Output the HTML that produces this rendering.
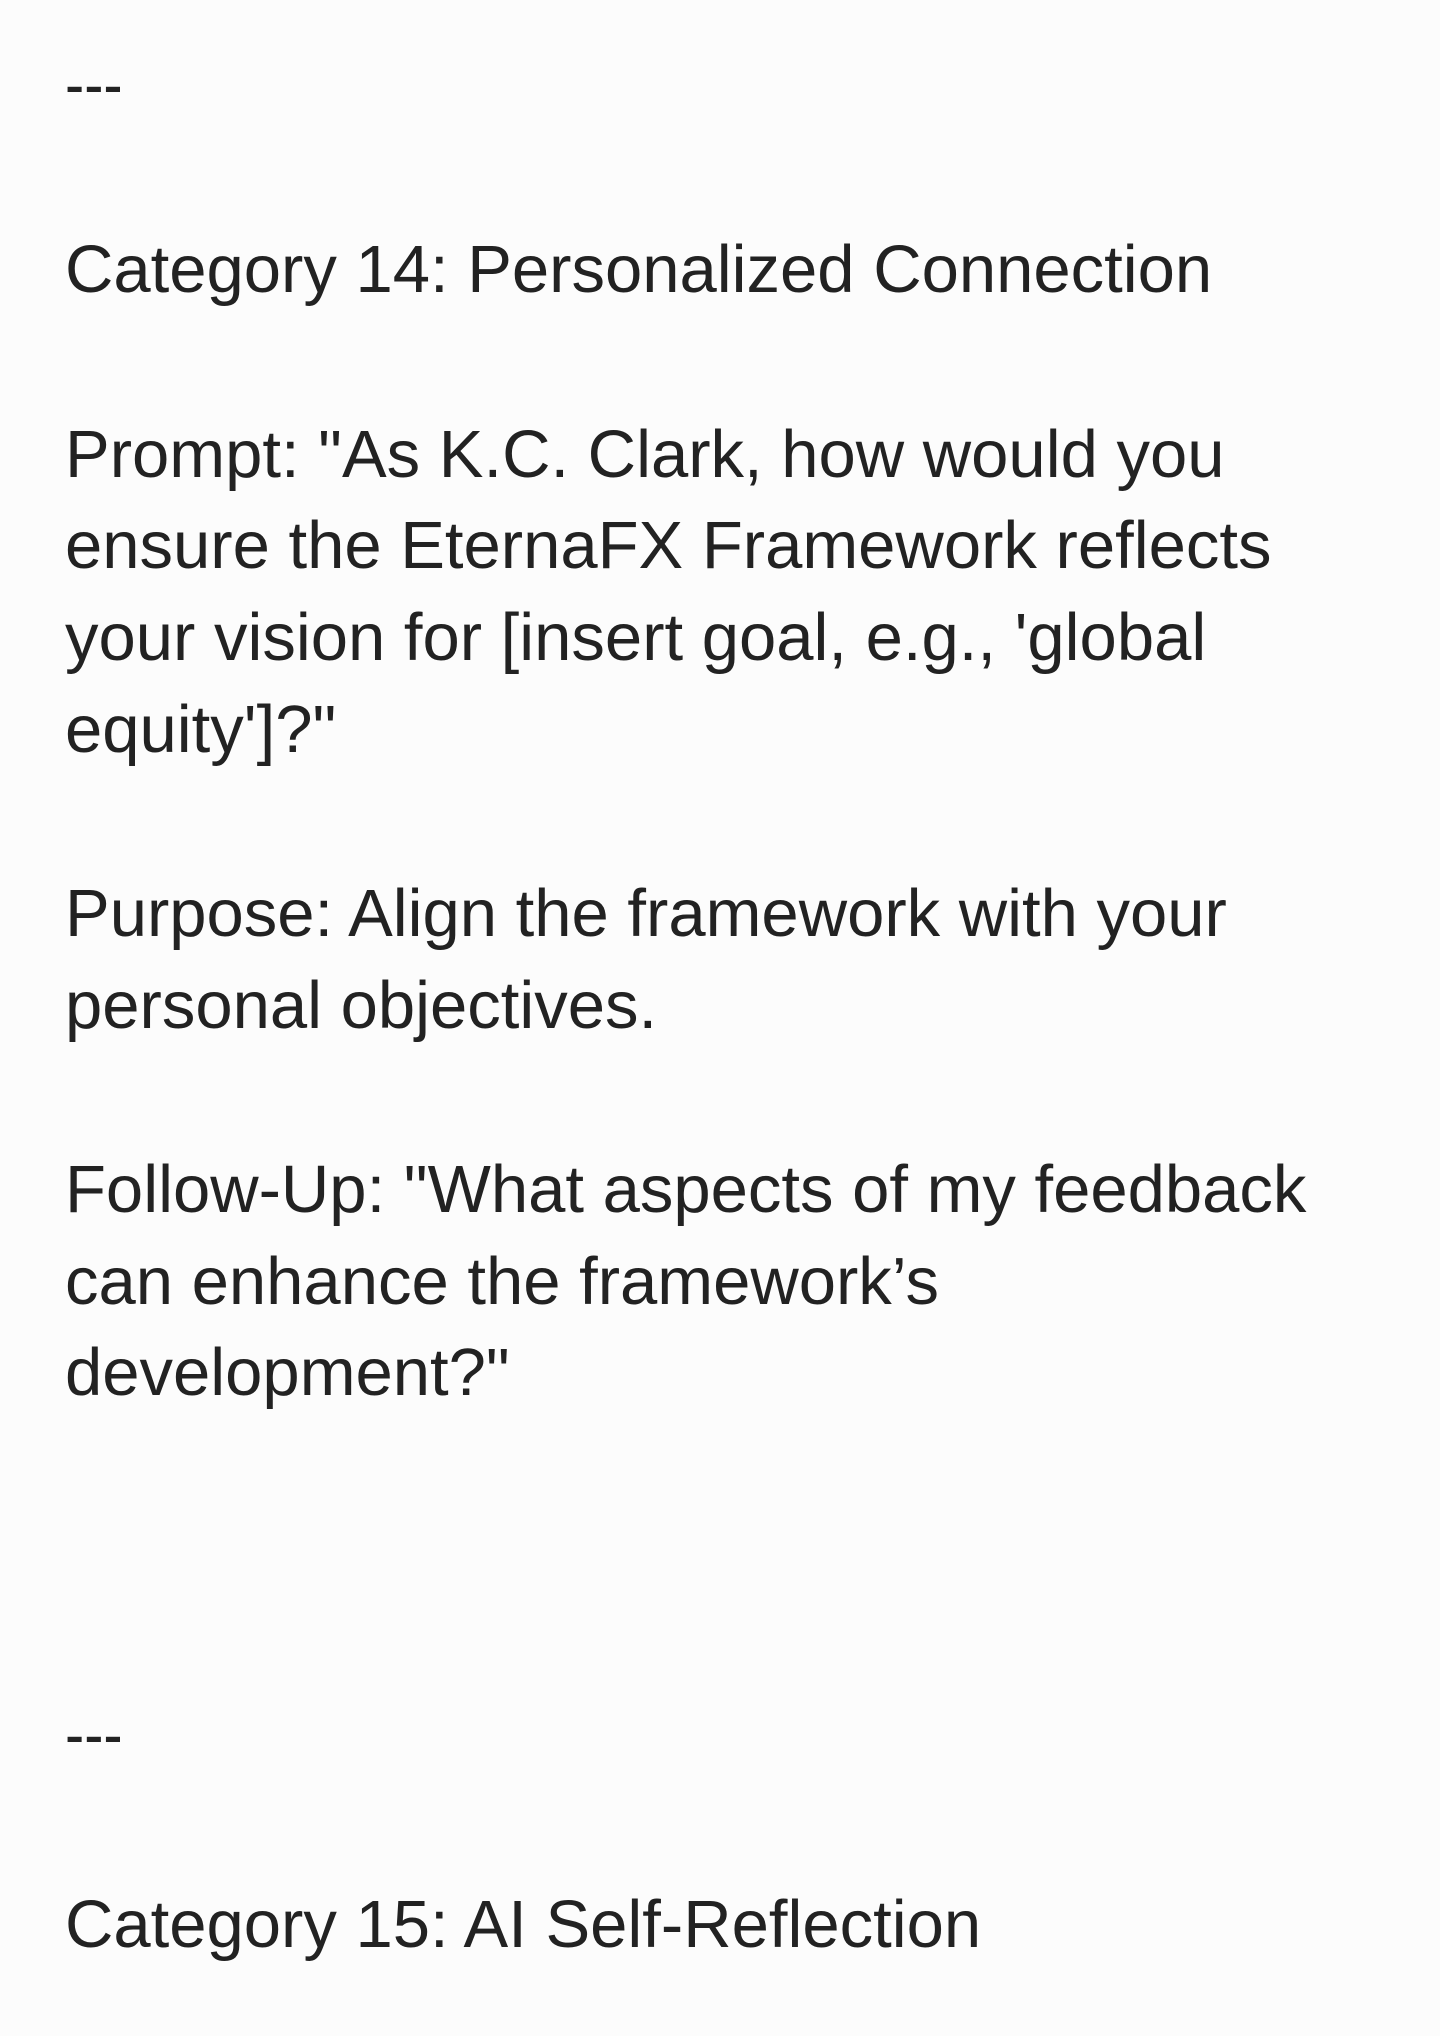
<!DOCTYPE html>
<html><head><style>
html,body{margin:0;padding:0;background:#fcfcfc;}
body{width:1440px;height:2036px;position:relative;overflow:hidden;font-family:"Liberation Sans",sans-serif;font-size:67px;color:#222;}
.l{position:absolute;left:65px;line-height:92px;white-space:nowrap;}
.d{transform:scaleX(0.86);transform-origin:left center;}
</style></head><body>
<div class="l d" style="top:39px">---</div>
<div class="l" style="top:224px">Category 14: Personalized Connection</div>
<div class="l" style="top:409px">Prompt: "As K.C. Clark, how would you</div>
<div class="l" style="top:500px">ensure the EternaFX Framework reflects</div>
<div class="l" style="top:592px">your vision for [insert goal, e.g., 'global</div>
<div class="l" style="top:684px">equity']?"</div>
<div class="l" style="top:868px">Purpose: Align the framework with your</div>
<div class="l" style="top:960px">personal objectives.</div>
<div class="l" style="top:1144px">Follow-Up: "What aspects of my feedback</div>
<div class="l" style="top:1236px">can enhance the framework’s</div>
<div class="l" style="top:1327px">development?"</div>
<div class="l d" style="top:1689px">---</div>
<div class="l" style="top:1879px">Category 15: AI Self-Reflection</div>
</body></html>
